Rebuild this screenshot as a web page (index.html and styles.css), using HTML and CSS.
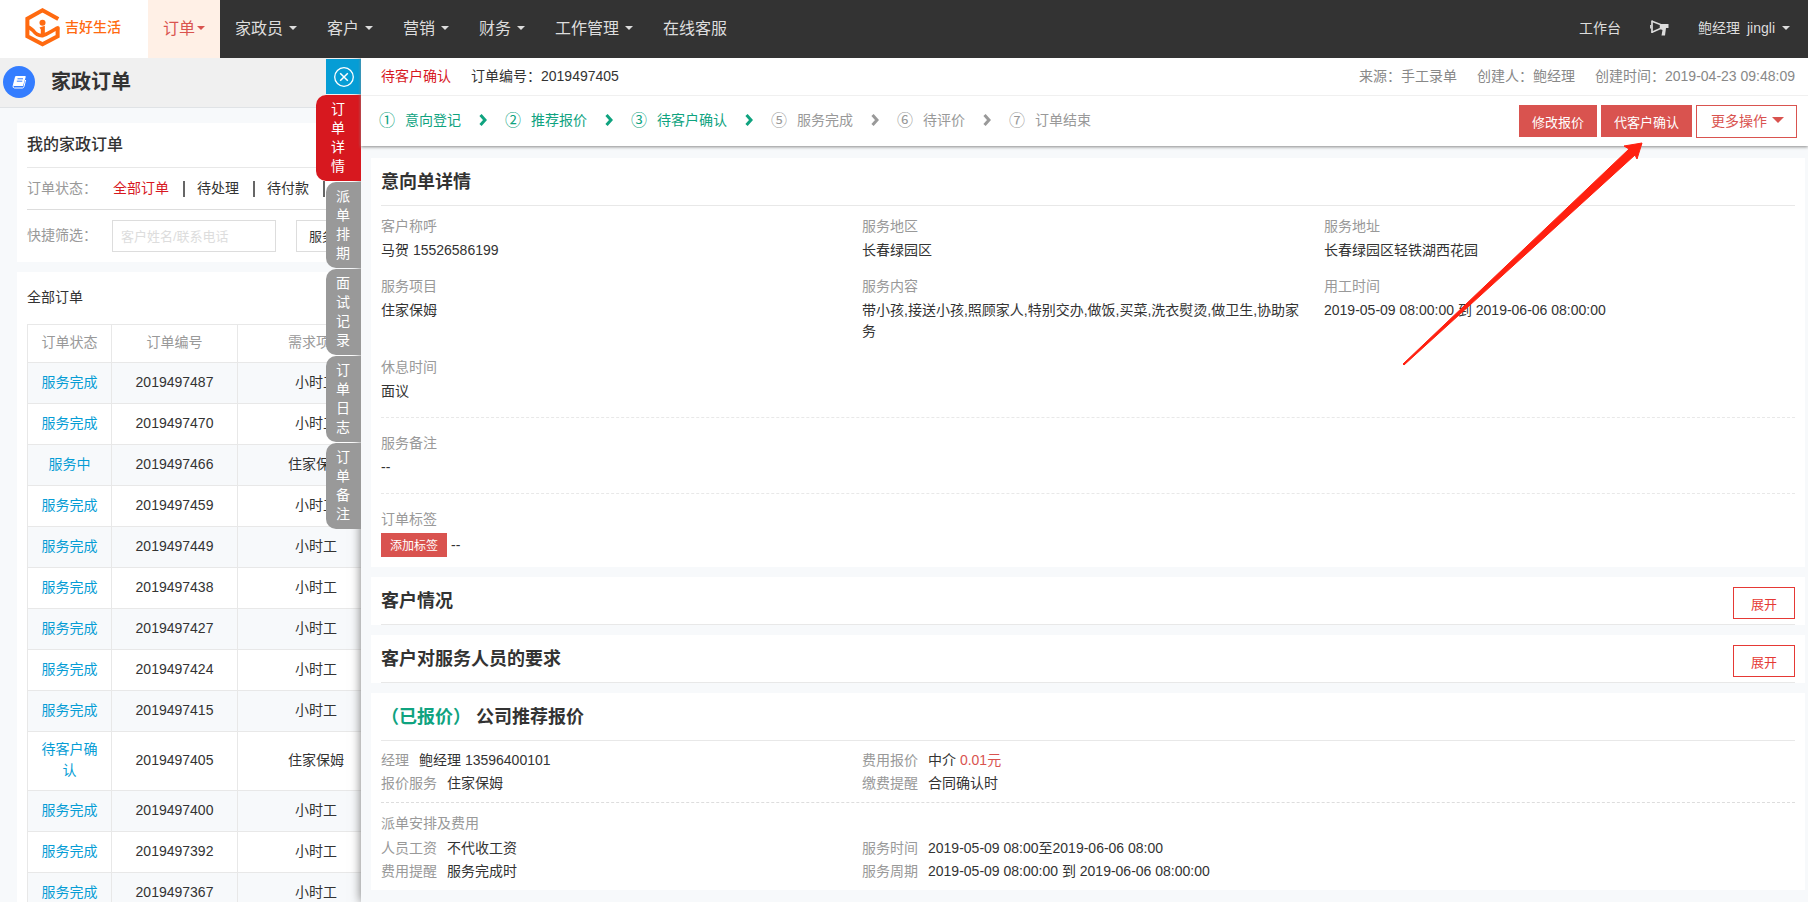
FILE: index.html
```html
<!DOCTYPE html>
<html lang="zh-CN">
<head>
<meta charset="utf-8">
<title>家政订单</title>
<link rel="stylesheet" href="styles.css">
</head>
<body>
<header class="nav">
  <a class="logo" href="#">
    <svg class="logo-mark" viewBox="0 0 104 116" aria-hidden="true">
      <path d="M99 33 L52 7 L7 32 V84 L52 108 L97 84 V56" fill="none" stroke="#ff6a10" stroke-width="12"/>
      <path d="M4 56 C12 56 17 60 24 67 C32 78 41 83 53 82 C72 76 84 64 101 58" fill="none" stroke="#ff6a10" stroke-width="11"/>
      <circle cx="52" cy="44" r="9" fill="#ff6a10"/>
      <path d="M43 58 L59 53 V82 H47 V64 Z" fill="#ff6a10"/>
    </svg>
    <span>吉好生活</span>
  </a>
  <nav class="menu">
    <a class="menu-item active" href="#">订单<i class="caret"></i></a>
    <a class="menu-item" href="#">家政员<i class="caret"></i></a>
    <a class="menu-item" href="#">客户<i class="caret"></i></a>
    <a class="menu-item" href="#">营销<i class="caret"></i></a>
    <a class="menu-item" href="#">财务<i class="caret"></i></a>
    <a class="menu-item" href="#">工作管理<i class="caret"></i></a>
    <a class="menu-item" href="#">在线客服</a>
  </nav>
  <div class="account">
    <a href="#">工作台</a>
    <a href="#" aria-label="公告">
      <svg class="horn" viewBox="0 0 19 17">
        <path d="M2 1.200 L10.500 4.600 V8.400 L2 12.200" fill="none" stroke="#ddd" stroke-width="1.500"/>
        <path d="M2 .5 V13" stroke="#ddd" stroke-width="1.700"/>
        <path d="M.7 5 V8.500" stroke="#ddd" stroke-width="1.200"/>
        <path d="M10 4 H18.500 V8 H16 L15 15.500 H11.500 L12.500 10 L10 9 Z" fill="#ddd"/>
      </svg>
    </a>
    <a class="user" href="#"><span>鲍经理</span><span>jingli</span><i class="caret"></i></a>
  </div>
</header>

<main class="page">
  <div class="page-head">
    <span class="page-icon">
      <svg viewBox="0 0 14 14" aria-hidden="true">
        <path d="M4 1 H13 Q14 1 13.700 2 L11 11 H2 Q.6 11 1 9.500 L3 2 Q3.300 1 4 1 Z" fill="#fff"/>
        <path d="M5.500 3.800 H11 M4.800 6.200 H10.300" stroke="#347dff" stroke-width="1"/>
        <path d="M1 10.500 Q.8 13 2.500 13 H10.500 Q11.500 13 12 11.500 L13.600 5" fill="none" stroke="#fff" stroke-width="1"/>
      </svg>
    </span>
    <h1>家政订单</h1>
  </div>

  <section class="panel">
    <h2 class="panel-title">我的家政订单</h2>
    <div class="status-row">
      <span class="row-label">订单状态：</span>
      <a class="status current" href="#">全部订单</a>
      <a class="status" href="#">待处理</a>
      <a class="status" href="#">待付款</a>
    </div>
    <div class="filter-row">
      <label class="row-label" for="keyword">快捷筛选：</label>
      <input class="field keyword" id="keyword" type="text" placeholder="客户姓名/联系电话">
      <select class="field service" aria-label="服务项目"><option>服务项目</option></select>
    </div>
  </section>

  <section class="panel">
    <h3 class="list-title">全部订单</h3>
    <table class="orders">
      <thead><tr><th class="c-state">订单状态</th><th class="c-no">订单编号</th><th class="c-item">需求项目</th></tr></thead>
      <tbody>
        <tr><td><a href="#">服务完成</a></td><td>2019497487</td><td>小时工</td></tr>
        <tr><td><a href="#">服务完成</a></td><td>2019497470</td><td>小时工</td></tr>
        <tr><td><a href="#">服务中</a></td><td>2019497466</td><td>住家保姆</td></tr>
        <tr><td><a href="#">服务完成</a></td><td>2019497459</td><td>小时工</td></tr>
        <tr><td><a href="#">服务完成</a></td><td>2019497449</td><td>小时工</td></tr>
        <tr><td><a href="#">服务完成</a></td><td>2019497438</td><td>小时工</td></tr>
        <tr><td><a href="#">服务完成</a></td><td>2019497427</td><td>小时工</td></tr>
        <tr><td><a href="#">服务完成</a></td><td>2019497424</td><td>小时工</td></tr>
        <tr><td><a href="#">服务完成</a></td><td>2019497415</td><td>小时工</td></tr>
        <tr><td><a href="#">待客户确认</a></td><td>2019497405</td><td>住家保姆</td></tr>
        <tr><td><a href="#">服务完成</a></td><td>2019497400</td><td>小时工</td></tr>
        <tr><td><a href="#">服务完成</a></td><td>2019497392</td><td>小时工</td></tr>
        <tr><td><a href="#">服务完成</a></td><td>2019497367</td><td>小时工</td></tr>
      </tbody>
    </table>
  </section>
</main>

<aside class="drawer">
  <div class="tabs">
    <button class="close" type="button" aria-label="关闭">
      <svg viewBox="0 0 20 20"><circle cx="10" cy="10" r="9.300" fill="none" stroke="#fff" stroke-width="1.300"/><path d="M6.200 6.200 L13.800 13.800 M13.800 6.200 L6.200 13.800" stroke="#fff" stroke-width="1.500"/></svg>
    </button>
    <button class="tab tab-on" type="button">订单详情</button>
    <button class="tab" type="button">派单排期</button>
    <button class="tab" type="button">面试记录</button>
    <button class="tab" type="button">订单日志</button>
    <button class="tab" type="button">订单备注</button>
  </div>

  <div class="drawer-head">
    <div class="summary">
      <span class="state">待客户确认</span>
      <span>订单编号：2019497405</span>
      <div class="meta">
        <span>来源：手工录单</span>
        <span>创建人：鲍经理</span>
        <span>创建时间：2019-04-23 09:48:09</span>
      </div>
    </div>
    <div class="progress">
      <ol class="steps">
        <li class="step done"><span class="num">①</span>意向登记<svg class="chev" viewBox="0 0 8 12"><path d="M1.500 1 L6 6 L1.500 11"/></svg></li>
        <li class="step done"><span class="num">②</span>推荐报价<svg class="chev" viewBox="0 0 8 12"><path d="M1.500 1 L6 6 L1.500 11"/></svg></li>
        <li class="step done"><span class="num">③</span>待客户确认<svg class="chev" viewBox="0 0 8 12"><path d="M1.500 1 L6 6 L1.500 11"/></svg></li>
        <li class="step"><span class="num">⑤</span>服务完成<svg class="chev" viewBox="0 0 8 12"><path d="M1.500 1 L6 6 L1.500 11"/></svg></li>
        <li class="step"><span class="num">⑥</span>待评价<svg class="chev" viewBox="0 0 8 12"><path d="M1.500 1 L6 6 L1.500 11"/></svg></li>
        <li class="step"><span class="num">⑦</span>订单结束</li>
      </ol>
      <div class="actions">
        <button class="btn" type="button">修改报价</button>
        <button class="btn" type="button">代客户确认</button>
        <button class="btn-more" type="button">更多操作<i class="caret-lg"></i></button>
      </div>
    </div>
  </div>

  <div class="cards">
    <section class="card">
      <div class="card-head"><h2>意向单详情</h2></div>
      <dl class="info">
        <div><dt>客户称呼</dt><dd>马贺 15526586199</dd></div>
        <div><dt>服务地区</dt><dd>长春绿园区</dd></div>
        <div><dt>服务地址</dt><dd>长春绿园区轻铁湖西花园</dd></div>
        <div><dt>服务项目</dt><dd>住家保姆</dd></div>
        <div><dt>服务内容</dt><dd>带小孩,接送小孩,照顾家人,特别交办,做饭,买菜,洗衣熨烫,做卫生,协助家务</dd></div>
        <div><dt>用工时间</dt><dd>2019-05-09 08:00:00 到 2019-06-06 08:00:00</dd></div>
        <div><dt>休息时间</dt><dd>面议</dd></div>
      </dl>
      <dl class="note"><dt>服务备注</dt><dd>--</dd></dl>
      <dl class="note tags"><dt>订单标签</dt><dd><button class="btn-tag" type="button">添加标签</button><span>--</span></dd></dl>
    </section>

    <section class="card">
      <div class="card-head"><h2>客户情况</h2><button class="btn-open" type="button">展开</button></div>
    </section>

    <section class="card">
      <div class="card-head"><h2>客户对服务人员的要求</h2><button class="btn-open" type="button">展开</button></div>
    </section>

    <section class="card">
      <div class="card-head"><h2><span class="quoted">（已报价）</span> 公司推荐报价</h2></div>
      <dl class="pairs">
        <div><dt>经理</dt><dd>鲍经理 13596400101</dd></div>
        <div><dt>费用报价</dt><dd>中介 <span class="price">0.01元</span></dd></div>
        <div><dt>报价服务</dt><dd>住家保姆</dd></div>
        <div><dt>缴费提醒</dt><dd>合同确认时</dd></div>
      </dl>
      <div class="dispatch">
        <h3>派单安排及费用</h3>
        <dl class="pairs">
          <div><dt>人员工资</dt><dd>不代收工资</dd></div>
          <div><dt>服务时间</dt><dd>2019-05-09 08:00至2019-06-06 08:00</dd></div>
          <div><dt>费用提醒</dt><dd>服务完成时</dd></div>
          <div><dt>服务周期</dt><dd>2019-05-09 08:00:00 到 2019-06-06 08:00:00</dd></div>
        </dl>
      </div>
    </section>
  </div>
</aside>

<svg class="pointer" viewBox="0 0 242 224" aria-hidden="true">
  <path d="M240 1 L222 4 L227 7 L1 222 L2 223 L233 13 L235 17 Z" fill="#ff2010" stroke="#ff2010" stroke-width="1"/>
</svg>
</body>
</html>
```
FILE: styles.css
```css
* { box-sizing: border-box; }

body {
  margin: 0;
  height: 100vh;
  position: relative;
  overflow: hidden;
  background: #f7f9fb;
  color: #333;
  font: 14px/21px "Liberation Sans", "Noto Sans CJK SC", sans-serif;
}

a { color: inherit; text-decoration: none; }
h1, h2, h3, dl, dt, dd, ol { margin: 0; padding: 0; }
ol { list-style: none; }
button, input, select { font-family: inherit; margin: 0; border-radius: 0; }
button { cursor: pointer; }

/* top navigation */
.nav { display: flex; height: 58px; background: #333; color: #ddd; }
.logo {
  display: flex; align-items: center; gap: 5px;
  width: 148px; padding: 0 0 3px 25px;
  background: #fff; color: #ff6a10; font-weight: 500;
}
.logo-mark { width: 35px; height: 39px; }
.menu { display: flex; flex: 1; }
.menu-item { display: flex; align-items: center; gap: 6px; padding: 0 15px 2px; font-size: 16px; white-space: nowrap; }
.menu-item.active { gap: 2px; background: #fff0e6; color: #d9534f; }
.caret { width: 8px; border: 4px solid transparent; border-top-color: currentColor; border-bottom: 0; }
.account { display: flex; align-items: center; gap: 29px; padding: 0 18px 2px 0; }
.horn { display: block; width: 19px; height: 17px; }
.user { display: flex; align-items: center; gap: 7px; }

/* order list */
.page { display: flex; flex-direction: column; gap: 10px; }
.page-head {
  display: flex; align-items: center; gap: 16px;
  height: 50px; padding: 0 3px 2px; margin-bottom: 5px;
  background: #f0f0f0; border-bottom: 1px solid #e0e3e6;
}
.page-icon { display: flex; align-items: center; justify-content: center; width: 32px; height: 32px; border-radius: 50%; background: #347dff; }
.page-icon svg { width: 14px; height: 14px; }
.page-head h1 { font-size: 20px; line-height: 30px; }
.panel { margin-left: 17px; padding: 0 10px; background: #fff; }
.panel-title { font-size: 16px; font-weight: 500; line-height: 44px; border-bottom: 1px solid #e8e8e8; }
.row-label { width: 85px; color: #999; white-space: nowrap; }
.status-row { display: flex; align-items: center; height: 42px; border-bottom: 1px solid #ddd; }
.status-row .row-label { width: 86px; }
.status { display: flex; align-items: center; }
.status::after { content: ""; width: 2px; height: 16px; margin: 0 12px 0 14px; background: #666; }
.status.current { color: #d7181f; }
.filter-row { display: flex; align-items: center; padding: 10px 0; }
.filter-row .row-label { padding-bottom: 2px; }
.field { height: 32px; border: 1px solid #ddd; background: #fff; color: #333; font-size: 13px; }
.keyword { width: 164px; padding: 0 8px; margin-right: 20px; }
.keyword::placeholder { color: #ddd; }
.service { width: 120px; padding: 0 8px; }
.list-title { padding-bottom: 2px; font-size: 14px; font-weight: 400; line-height: 50px; }
.orders { border-collapse: collapse; table-layout: fixed; width: 368px; }
.orders th, .orders td { height: 41px; padding: 7px 10px 9px; border: 1px solid #e8e8e8; text-align: center; }
.orders th { height: 38px; color: #999; font-weight: 400; }
.orders tbody tr:nth-child(odd) { background: #f7f9fb; }
.orders td a { color: #069dd5; }
.c-state { width: 84px; }
.c-no { width: 126px; }

/* detail drawer over the list */
.drawer {
  position: absolute; top: 58px; right: 0; bottom: 0; left: 361px;
  background: #f7f9fb; box-shadow: 0 0 10px #777;
  clip-path: inset(0 0 0 -60px);
}
.tabs { position: absolute; top: 1px; right: 100%; display: flex; flex-direction: column; align-items: flex-end; gap: 1px; }
.close { display: flex; align-items: center; justify-content: center; width: 35px; height: 35px; padding: 0; border: 0; background: #069dd5; }
.close svg { width: 20px; height: 20px; }
.tab {
  width: 35px; padding: 5px 11px 5px 10px; border: 0; border-radius: 10px 0 0 10px;
  background: #999; color: #fff; font-size: 14px; line-height: 19px; word-break: break-all;
}
.tab-on { width: 45px; padding: 5px 16px 5px 15px; background: #d7181f; }

.drawer-head { position: relative; background: #fff; box-shadow: 0 1px 3px #888; }
.summary { display: flex; align-items: center; gap: 20px; height: 38px; padding: 0 13px 1px 20px; border-bottom: 1px solid #f0f0f0; }
.state { color: #d7181f; }
.meta { display: flex; gap: 20px; margin-left: auto; color: #888; }
.progress { display: flex; align-items: center; justify-content: space-between; height: 50px; padding: 0 11px 0 18px; }
.steps { display: flex; padding-bottom: 2px; }
.step { display: flex; align-items: center; color: #999; white-space: nowrap; }
.step.done { color: #0fa37f; }
.num { width: 16px; margin-right: 10px; font-size: 16px; }
.chev { width: 8px; height: 12px; margin: 0 18px; fill: none; stroke: currentColor; stroke-width: 3; }
.actions { display: flex; align-items: center; gap: 4px; }
.btn, .btn-tag { border: 0; background: #d9534f; color: #fff; }
.btn { height: 32px; padding: 0 13px; font-size: 13px; }
.btn-more { display: flex; align-items: center; gap: 5px; height: 33px; padding: 0 12px 2px 14px; border: 1px solid #d9534f; background: #fff; color: #d9534f; font-size: 14px; }
.caret-lg { width: 12px; border: 6px solid transparent; border-top-color: currentColor; border-bottom: 0; }

.cards { display: flex; flex-direction: column; gap: 10px; padding: 12px 3px 12px 10px; }
.card { padding: 0 10px; background: #fff; }
.card-head { display: flex; justify-content: space-between; align-items: flex-start; height: 48px; border-bottom: 1px solid #e8e8e8; }
.card-head h2 { font-size: 18px; line-height: 48px; white-space: pre; }
.btn-open { width: 62px; height: 32px; margin-top: 10px; padding: 0; border: 1px solid #e53935; background: #fff; color: #e53935; font-size: 13px; }
.info { display: grid; grid-template-columns: 481fr 462fr 471fr; row-gap: 15px; padding: 10px 0 15px; }
.info > div { padding-right: 15px; }
dt { color: #999; }
.info dd, .note dd { margin-top: 3px; }
.note { padding: 15px 0; border-top: 1px dashed #e8e8e8; }
.tags { padding-bottom: 10px; }
.tags dd { display: flex; align-items: center; gap: 4px; }
.btn-tag { height: 24px; padding: 0 9px 2px; font-size: 12px; }
.quoted { color: #0fa37f; }
.pairs { display: grid; grid-template-columns: 481fr 933fr; padding: 8px 0 7px; line-height: 23px; }
.pairs > div { display: flex; gap: 10px; }
.price { color: #d9534f; }
.dispatch { padding-top: 9px; border-top: 1px dashed #ddd; }
.dispatch h3 { color: #999; font-size: 14px; font-weight: 400; line-height: 23px; }
.dispatch .pairs { padding-top: 2px; }

/* callout arrow */
.pointer { position: absolute; top: 142px; right: 164px; width: 242px; height: 224px; pointer-events: none; }
```
